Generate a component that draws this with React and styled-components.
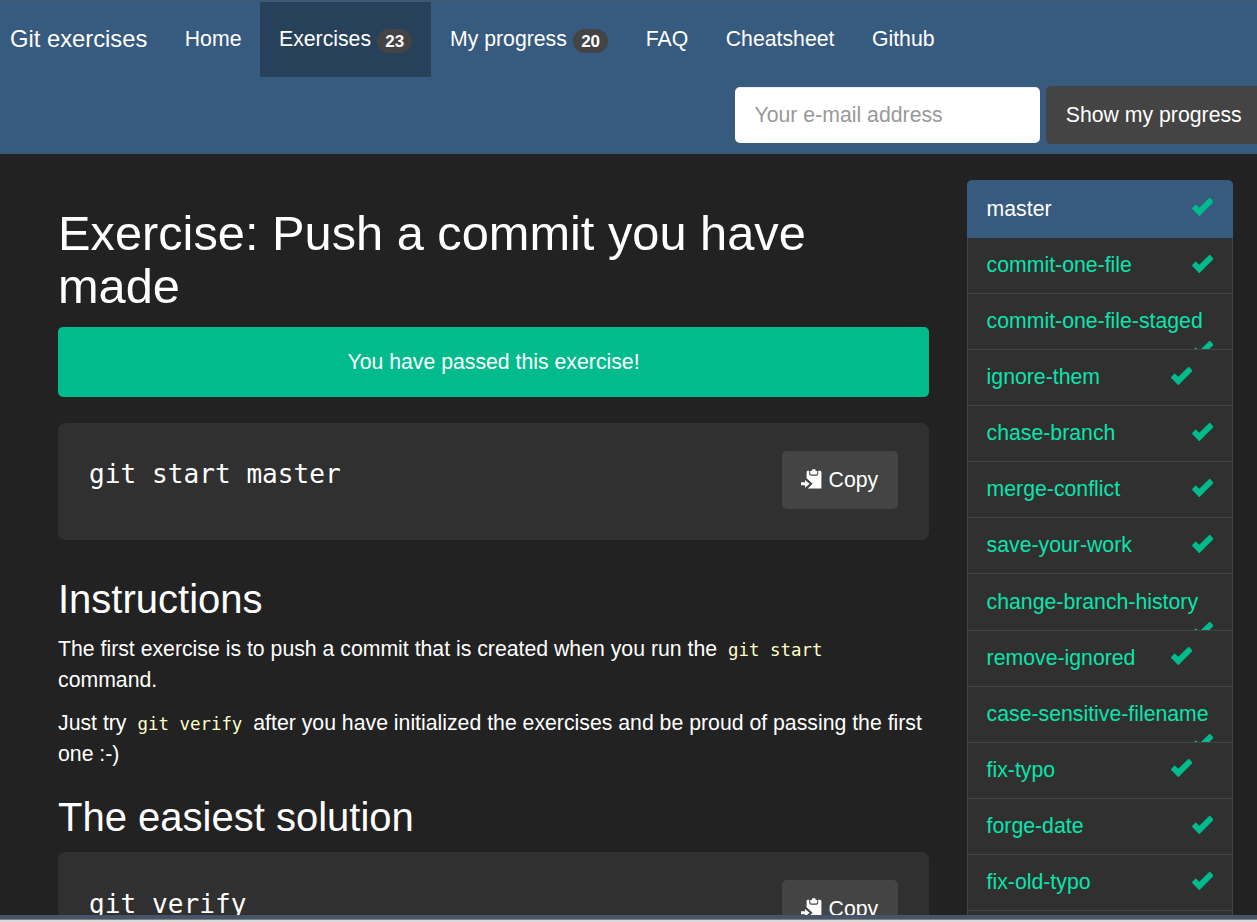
import React from "react";
import styled, { createGlobalStyle } from "styled-components";

const Global = createGlobalStyle`
  * { box-sizing: border-box; }
  body {
    margin: 0;
    background: #222;
    color: #fff;
    font: 21.25px/1.42857 "Liberation Sans", Arial, sans-serif;
  }
`;

const Page = styled.div`
  height: 922px;
  display: flex;
  flex-direction: column;
  overflow: hidden;
`;

const TopEdge = styled.div`
  flex: none;
  height: 1px;
  background: #44546a;
`;

const BottomEdge = styled.div`
  flex: none;
  height: 7px;
  background: #d9d9d9;
  border-top: 4px solid #44546a;
  box-shadow: inset 0 1px 0 #7f7f7f;
`;

const Navbar = styled.header`
  flex: none;
  height: 153px;
  background: #375a7f;
`;

const NavRow = styled.nav`
  display: flex;
  padding-top: 1px;
`;

const Brand = styled.a`
  padding: 22px 18.75px 0 10px;
  font-size: 23.75px;
  line-height: 30px;
`;

const NavItem = styled.a`
  display: block;
  height: 75px;
  padding: 22px 18.75px 0;
  line-height: 30px;
  white-space: nowrap;
  background: ${(p) => (p.$active ? "#28415b" : "transparent")};
`;

const Badge = styled.span`
  display: inline-block;
  min-width: 35.3px;
  height: 24px;
  margin-left: 0.2px;
  padding: 0 8px;
  border-radius: 12px;
  background: #444;
  font-size: 17px;
  font-weight: bold;
  line-height: 25px;
  text-align: center;
  vertical-align: -1px;
`;

const SearchForm = styled.form`
  display: flex;
  align-items: center;
  gap: 6px;
  padding: 9px 0 0 735px;
`;

const EmailInput = styled.input`
  flex: none;
  width: 305px;
  height: 56px;
  padding: 1px 19.5px 0;
  border: 0;
  border-radius: 5px;
  background: #fff;
  box-shadow: inset 0 1px 1px rgba(0, 0, 0, 0.075);
  font: inherit;
  &::placeholder { color: #999; opacity: 1; }
`;

const Button = styled.button`
  flex: none;
  display: flex;
  align-items: center;
  gap: 7px;
  height: 58px;
  padding: 0 19.75px;
  border: 0;
  border-radius: 5px;
  background: #444;
  color: #fff;
  font: inherit;
  white-space: nowrap;
`;

const CopyButton = styled(Button)`
  width: 116px;
  padding: 0 0 0 19px;
  gap: 6.6px;
  svg { margin-bottom: 2px; }
`;

const Body = styled.div`
  flex: 1;
  min-height: 0;
  display: flex;
  align-items: flex-start;
  gap: 38px;
  padding: 26px 24px 0 58px;
  overflow: hidden;
`;

const Main = styled.main`
  width: 871px;
  padding-top: 27px;
`;

const Title = styled.h1`
  margin: 0 0 14px;
  font-size: 48.75px;
  font-weight: normal;
  line-height: 53px;
`;

const Heading = styled.h2`
  margin: ${(p) => p.$top}px 0 13px;
  font-size: 40px;
  font-weight: normal;
  line-height: 44px;
`;

const Alert = styled.div`
  height: 70px;
  margin-bottom: 26px;
  border-radius: 5px;
  background: #00bc8c;
  line-height: 70px;
  text-align: center;
`;

const CommandBox = styled.div`
  display: flex;
  align-items: flex-start;
  justify-content: space-between;
  height: 117px;
  padding: 28px 31px;
  border-radius: 7.5px;
  background: #303030;
`;

const Command = styled.code`
  padding-top: 4.3px;
  font: 26.15px/38px "DejaVu Sans Mono", monospace;
`;

const Text = styled.p`
  margin: 0 0 13px;
  line-height: 30.6px;
`;

const InlineCode = styled.code`
  padding: 0 5px;
  color: #ffffc8;
  font: 17.44px/20px "DejaVu Sans Mono", monospace;
`;

const ExerciseList = styled.aside`
  width: 266px;
  border-radius: 5px;
  overflow: hidden;
  margin-bottom: -60px;
`;

const Exercise = styled.a`
  display: flex;
  flex-wrap: wrap;
  align-content: flex-start;
  height: 56.08px;
  padding: 12.1px 19px 0 18.6px;
  border: 1px solid #444;
  border-top: 0;
  overflow: hidden;
  background: #303030;
  color: #0ce3ac;
`;

const ActiveExercise = styled(Exercise)`
  height: 58px;
  padding: 14px 19px 0 18.6px;
  border-color: #375a7f;
  background: #375a7f;
  color: #fff;
`;

const Tick = styled.span`
  display: block;
  height: 30.4px;
  margin-left: auto;
  margin-right: ${(p) => (p.$shifted ? 21 : 0)}px;
  padding-top: ${(p) => (p.$active ? 4 : 4.7)}px;
  svg { display: block; }
`;

const CheckIcon = () => (
  <svg width="21.5" height="18" viewBox="0 0 21.5 18" fill="#00bc8c">
    <path d="M18.2 0.1 21.3 3.4Q21.6 3.8 21.2 4.2L7.8 17.7Q7.3 18.1 6.8 17.7L0.2 10.9Q-.1 10.4.2 10L3.3 6.7Q3.7 6.4 4.1 6.7L7.3 9.7 17.2.1Q17.7-.2 18.2 .1Z" />
  </svg>
);

const PasteIcon = () => (
  <svg width="21" height="21" viewBox="0 0 21 21" fill="#fff">
    <path d="M7 1.8H8.2V4.7Q8.2 6.7 10.2 6.7H15.2Q17.2 6.7 17.2 4.7V1.8H18.8Q20.4 1.8 20.4 3.2V19.5H6.8L11.6 14.8 5.6 9.2V3.2Q5.6 1.8 7 1.8Z" />
    <path d="M9.2 2H10.6Q11 0 12.8 0T15 2H16.3V4.2Q16.3 5.6 15 5.6H10.5Q9.2 5.6 9.2 4.2Z" />
    <path d="M0 13.3H4V10.9L8.6 14.8 4 18.7V16.2H0Z" />
  </svg>
);

const exercises = [
  ["master"],
  ["commit-one-file"],
  ["commit-one-file-staged"],
  ["ignore-them", true],
  ["chase-branch"],
  ["merge-conflict"],
  ["save-your-work"],
  ["change-branch-history"],
  ["remove-ignored", true],
  ["case-sensitive-filename"],
  ["fix-typo", true],
  ["forge-date"],
  ["fix-old-typo"],
  [""],
];

const CommandBlock = ({ children }) => (
  <CommandBox>
    <Command>{children}</Command>
    <CopyButton type="button">
      <PasteIcon />
      Copy
    </CopyButton>
  </CommandBox>
);

export default function App() {
  return (
    <Page>
      <Global />
      <TopEdge />
      <Navbar>
        <NavRow>
          <Brand>Git exercises</Brand>
          <NavItem>Home</NavItem>
          <NavItem $active>
            Exercises <Badge>23</Badge>
          </NavItem>
          <NavItem>
            My progress <Badge>20</Badge>
          </NavItem>
          <NavItem>FAQ</NavItem>
          <NavItem>Cheatsheet</NavItem>
          <NavItem>Github</NavItem>
        </NavRow>
        <SearchForm>
          <EmailInput placeholder="Your e-mail address" />
          <Button type="button">Show my progress</Button>
        </SearchForm>
      </Navbar>
      <Body>
        <Main>
          <Title>Exercise: Push a commit you have made</Title>
          <Alert>You have passed this exercise!</Alert>
          <CommandBlock>git start master</CommandBlock>
          <Heading $top={37}>Instructions</Heading>
          <Text>
            The first exercise is to push a commit that is created when you run the{" "}
            <InlineCode>git start</InlineCode> command.
          </Text>
          <Text>
            Just try <InlineCode>git verify</InlineCode> after you have initialized the
            exercises and be proud of passing the first one :-)
          </Text>
          <Heading $top={26}>The easiest solution</Heading>
          <CommandBlock>git verify</CommandBlock>
        </Main>
        <ExerciseList>
          {exercises.map(([name, shifted], i) => {
            const Row = i === 0 ? ActiveExercise : Exercise;
            return (
              <Row key={name}>
                {name}
                {name && (
                  <Tick $shifted={shifted} $active={i === 0}>
                    <CheckIcon />
                  </Tick>
                )}
              </Row>
            );
          })}
        </ExerciseList>
      </Body>
      <BottomEdge />
    </Page>
  );
}
